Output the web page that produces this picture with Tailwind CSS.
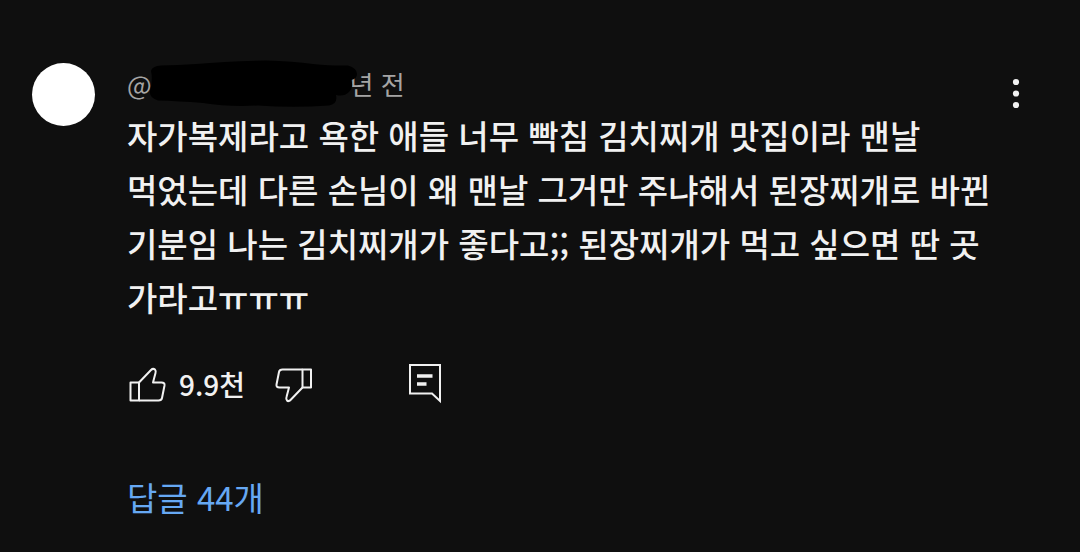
<!DOCTYPE html>
<html lang="ko">
<head>
    <meta charset="UTF-8" />
    <meta name="viewport" content="width=device-width, initial-scale=1.0" />
    <title>댓글</title>
    <script src="https://cdn.jsdelivr.net/npm/@tailwindcss/browser@4"></script>
</head>

<body class="min-h-screen bg-[#0f0f0f] text-[#f1f1f1] font-['Noto_Sans_CJK_KR','Noto_Sans',sans-serif]">
<article class="flex gap-8 px-8 pt-[60px] pb-6">
    <!-- Avatar -->
    <a href="#" aria-label="프로필" class="mt-[3px] size-[63px] shrink-0 rounded-full bg-white"></a>

    <div class="min-w-0 flex-1">
        <!-- Author, time and menu -->
        <header class="flex h-12 items-start justify-between text-[26px] text-[#a5a5a5]">
            <div class="flex items-center leading-[48px]">
                <span>@</span>
                <!-- Redacted name -->
                <svg class="relative -ml-1 -mr-2.5 h-12 w-[212px]" viewBox="0 0 212 48" fill="#000" aria-hidden="true">
                    <path d="M3 11Q4 6 13 5.500Q30 5 48 4Q80 1 118 .5Q145 1 165 4Q185 6 200 5.500Q209 8 209 14Q209 19 203 20Q206 27 201 32Q196 37 188 35Q190 44 181 45.500Q145 48 110 45.500Q80 47 55 43Q30 41 10 40.500Q1 38 2 31Q5 20 3 11Z" />
                </svg>
                <span>년 전</span>
            </div>
            <button type="button" aria-label="작업 메뉴" class="mt-[18px] mr-[26px] cursor-pointer">
                <svg class="h-8 w-3" viewBox="0 0 12 32" fill="#f1f1f1">
                    <circle cx="6" cy="4" r="3.1" />
                    <circle cx="6" cy="15.500" r="3.1" />
                    <circle cx="6" cy="27" r="3.1" />
                </svg>
            </button>
        </header>

        <!-- Comment text -->
        <p class="text-[33px] leading-[54px] font-medium break-keep">자가복제라고 욕한 애들 너무 빡침 김치찌개 맛집이라 맨날 먹었는데 다른 손님이 왜 맨날 그거만 주냐해서 된장찌개로 바뀐 기분임 나는 김치찌개가 좋다고;; 된장찌개가 먹고 싶으면 딴 곳 가라고ㅠㅠㅠ</p>

        <!-- Actions -->
        <div class="mt-9 flex h-12 items-center">
            <button type="button" class="flex cursor-pointer items-center gap-3 text-[28px] font-medium" aria-label="좋아요 9.9천">
                <svg class="size-10" viewBox="0 0 40 40" fill="none" stroke="#f1f1f1" stroke-width="2" stroke-linejoin="round">
                    <path d="M3.500 18.500H12V36.500H3.500Z" />
                    <path d="M12 18.500L24 6Q26 4 28 5.500Q29.200 7 28.500 9L26 18.500H34.500Q38 18.500 37.500 21.500L35 34Q34.500 36.500 31.500 36.500H12" />
                </svg>
                <span>9.9천</span>
            </button>
            <button type="button" class="ml-7 cursor-pointer" aria-label="싫어요">
                <svg class="size-10" viewBox="0 0 40 40" fill="none" stroke="#f1f1f1" stroke-width="2" stroke-linejoin="round">
                    <path d="M38 5.500H29.500V23.500H38Z" />
                    <path d="M29.500 23.500L17.500 36Q15.500 38 14 36.500Q12.800 35 13.500 33L16 23.500H6.500Q3 23.500 3.500 20.500L6 8Q6.500 5.500 9.500 5.500H29.500" />
                </svg>
            </button>
            <button type="button" class="ml-23 cursor-pointer" aria-label="답글">
                <svg class="size-10" viewBox="0 0 40 40" fill="none" stroke="#f1f1f1">
                    <path d="M5 1H35V37L27 29.500H5Z" stroke-width="2" />
                    <path d="M12 12H27.500M12 20H21.500" stroke-width="3.500" />
                </svg>
            </button>
        </div>

        <!-- Replies -->
        <a href="#" class="mt-[62px] inline-block text-[33px] leading-[54px] text-[#66a8f3]">답글 44개</a>
    </div>
</article>
</body>
</html>
